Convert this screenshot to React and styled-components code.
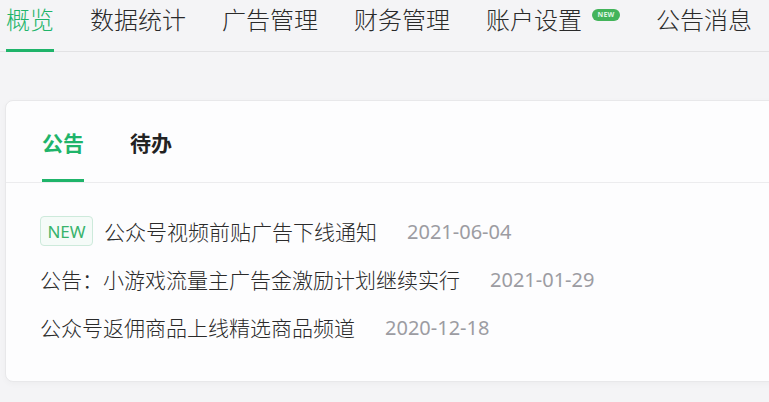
import React from 'react';
import styled, { createGlobalStyle } from 'styled-components';

const GlobalStyle = createGlobalStyle`
  html, body {
    margin: 0;
    padding: 0;
    background: #f4f4f6;
    overflow: hidden;
  }
  body {
    font-family: "Noto Sans", "Noto Sans CJK SC", sans-serif;
    color: #333;
  }
`;

const Page = styled.div`
  width: 769px;
  height: 402px;
  overflow: hidden;
`;

const Nav = styled.nav`
  display: flex;
  align-items: flex-start;
  gap: 36px;
  height: 51px;
  padding-left: 6px;
  border-bottom: 1px solid #e2e2e4;
`;

const NavItem = styled.div`
  display: flex;
  align-items: flex-start;
  height: 52px;
  box-sizing: border-box;
  padding-top: 4px;
  margin-bottom: -1px;
  font-size: 24px;
  line-height: 32px;
  font-weight: 300;
  white-space: nowrap;
  color: ${p => (p.$active ? '#1fb46a' : '#2a2a2a')};
  border-bottom: 3px solid ${p => (p.$active ? '#1fb46a' : 'transparent')};
`;

const NavBadge = styled.span`
  margin: 5px 0 0 10px;
  width: 28px;
  height: 12px;
  border-radius: 6px;
  background: #43b45b;
  color: #dff5e4;
  font-size: 7px;
  line-height: 12px;
  text-align: center;
  font-weight: 700;
  letter-spacing: 0.2px;
`;

const Card = styled.section`
  margin: 48px -20px 0 5px;
  height: 282px;
  box-sizing: border-box;
  background: #fdfdfe;
  border: 1px solid #e8e8ea;
  border-radius: 8px;
  box-shadow: 0 2px 6px rgba(0, 0, 0, 0.03);
`;

const TabBar = styled.div`
  display: flex;
  gap: 46px;
  padding-left: 36px;
  border-bottom: 1px solid #ececee;
`;

const Tab = styled.div`
  height: 81px;
  box-sizing: border-box;
  padding-top: 27px;
  font-size: 21px;
  line-height: 30px;
  font-weight: 700;
  color: ${p => (p.$active ? '#1fb46a' : '#222')};
  border-bottom: 3px solid ${p => (p.$active ? '#1fb46a' : 'transparent')};
`;

const List = styled.ul`
  list-style: none;
  margin: 0;
  padding: 24px 0 0 34px;
`;

const Row = styled.li`
  display: flex;
  align-items: center;
  height: 48px;
  font-size: 21px;
  font-weight: 300;
  color: #2a2a2a;
  white-space: nowrap;
`;

const NewTag = styled.span`
  display: inline-flex;
  align-items: center;
  justify-content: center;
  width: 53px;
  height: 30px;
  box-sizing: border-box;
  margin-right: 11px;
  border: 1px solid #cdeadb;
  border-radius: 4px;
  background: #f5fbf8;
  color: #38b36c;
  font-size: 17px;
  font-weight: 400;
`;

const Date = styled.span`
  margin-left: 30px;
  color: #9c9ca2;
  font-size: 20px;
  font-weight: 400;
`;

const navItems = ['概览', '数据统计', '广告管理', '财务管理', '账户设置', '公告消息'];

const notices = [
  { title: '公众号视频前贴广告下线通知', date: '2021-06-04', isNew: true },
  { title: '公告：小游戏流量主广告金激励计划继续实行', date: '2021-01-29' },
  { title: '公众号返佣商品上线精选商品频道', date: '2020-12-18' },
];

export default function App() {
  return (
    <Page>
      <GlobalStyle />
      <Nav>
        {navItems.map((item, i) => (
          <NavItem key={item} $active={i === 0}>
            {item}
            {item === '账户设置' && <NavBadge>NEW</NavBadge>}
          </NavItem>
        ))}
      </Nav>
      <Card>
        <TabBar>
          <Tab $active>公告</Tab>
          <Tab>待办</Tab>
        </TabBar>
        <List>
          {notices.map(n => (
            <Row key={n.title}>
              {n.isNew && <NewTag>NEW</NewTag>}
              <span>{n.title}</span>
              <Date>{n.date}</Date>
            </Row>
          ))}
        </List>
      </Card>
    </Page>
  );
}
